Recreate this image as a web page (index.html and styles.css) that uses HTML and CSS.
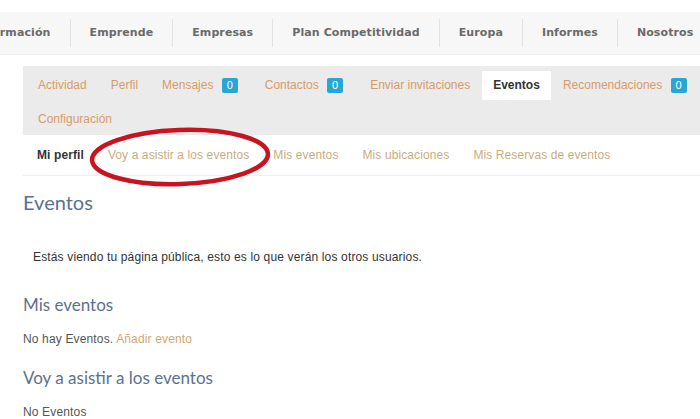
FILE: index.html
```html
<!DOCTYPE html>
<html lang="es">
<head>
  <meta charset="UTF-8">
  <meta name="viewport" content="width=device-width, initial-scale=1.0">
  <title>Eventos</title>
  <link rel="stylesheet" href="styles.css">
</head>
<body>
  <div class="page">
    <nav class="main-nav">
      <a href="#" class="first">Formación</a>
      <a href="#">Emprende</a>
      <a href="#">Empresas</a>
      <a href="#">Plan Competitividad</a>
      <a href="#">Europa</a>
      <a href="#">Informes</a>
      <a href="#">Nosotros</a>
    </nav>

    <div class="profile">
      <ul class="tabs">
        <li><a href="#">Actividad</a></li>
        <li><a href="#">Perfil</a></li>
        <li><a href="#">Mensajes <span class="badge">0</span></a></li>
        <li><a href="#">Contactos <span class="badge">0</span></a></li>
        <li><a href="#">Enviar invitaciones</a></li>
        <li class="active"><a href="#">Eventos</a></li>
        <li><a href="#">Recomendaciones <span class="badge">0</span></a></li>
        <li><a href="#">Configuración</a></li>
      </ul>

      <div class="subnav">
        <a href="#" class="current">Mi perfil</a>
        <a href="#">Voy a asistir a los eventos</a>
        <a href="#">Mis eventos</a>
        <a href="#">Mis ubicaciones</a>
        <a href="#">Mis Reservas de eventos</a>
        <svg class="circle" width="190" height="70" viewBox="0 0 190 70">
          <ellipse cx="94" cy="34" rx="88" ry="27" transform="rotate(-2 94 34)" />
        </svg>
      </div>

      <div class="content">
        <h1>Eventos</h1>
        <p class="notice">Estás viendo tu página pública, esto es lo que verán los otros usuarios.</p>

        <h2>Mis eventos</h2>
        <p>No hay Eventos. <a href="#">Añadir evento</a></p>

        <h2>Voy a asistir a los eventos</h2>
        <p>No Eventos</p>
      </div>
    </div>
  </div>
</body>
</html>
```

FILE: styles.css
```css
html, body {
  margin: 0;
  padding: 0;
  background: #fff;
  overflow: hidden;
}
body {
  font-family: 'Liberation Sans', Arial, sans-serif;
  font-size: 12px;
  color: #444;
}
a {
  text-decoration: none;
}
.page {
  width: 900px;
}

/* top menu */
.main-nav {
  margin-top: 12px;
  height: 42px;
  display: flex;
  align-items: center;
  background: #f7f7f7;
  border-bottom: 1px solid #efefef;
  margin-left: -15px;
}
.main-nav a {
  font-family: 'DejaVu Sans', Verdana, sans-serif;
  font-weight: bold;
  font-size: 11px;
  letter-spacing: 0.1px;
  color: #6a6a6a;
  padding: 0 19px;
  line-height: 28px;
  border-right: 1px solid #e2e2e2;
}
.main-nav a.first {
  padding-left: 0;
}

/* profile area */
.profile {
  margin-left: 23px;
}
.tabs {
  list-style: none;
  margin: 11px 0 0;
  padding: 5px 3px 1px;
  background: #ebebeb;
  display: flex;
  flex-wrap: wrap;
  row-gap: 5px;
  width: 740px;
}
.tabs li a {
  display: block;
  padding: 0 12px 1px;
  line-height: 28px;
  color: #d69c68;
}
.tabs li.active a {
  background: #fff;
  color: #333;
  font-weight: bold;
  padding: 0 11px 1px;
}
.badge {
  display: inline-block;
  background: #2aa6d5;
  color: #fff;
  font-size: 11px;
  line-height: 15px;
  width: 16px;
  text-align: center;
  border-radius: 2px;
  margin: 0 3px 0 5px;
}

.subnav {
  position: relative;
  display: flex;
  align-items: center;
  height: 40px;
  padding-left: 2px;
  border-bottom: 1px solid #eee;
  letter-spacing: 0.1px;
}
.subnav a {
  padding: 0 12px;
  color: #c9ab7f;
}
.subnav a.current {
  color: #333;
  font-weight: bold;
}
.circle {
  position: absolute;
  left: 63px;
  top: -12px;
}
.circle ellipse {
  fill: none;
  stroke: #c9141f;
  stroke-width: 4.5;
}

/* page body */
.content h1, .content h2 {
  font-family: Lato, 'Open Sans', sans-serif;
  font-weight: normal;
  color: #5b7190;
  margin: 0;
}
.content h1 {
  font-size: 20px;
  line-height: 24px;
  margin-top: 14px;
}
.content h2 {
  font-size: 17px;
  line-height: 22px;
}
.content p {
  margin: 15px 0 0;
  line-height: 16px;
  color: #555;
  letter-spacing: 0.15px;
}
.content p a {
  color: #d1a874;
}
.content p.notice {
  margin-top: 35px;
  padding-left: 10px;
  color: #333;
}
.content p.notice + h2 {
  margin-top: 29px;
}
.content p + h2 {
  margin-top: 20px;
}
```
